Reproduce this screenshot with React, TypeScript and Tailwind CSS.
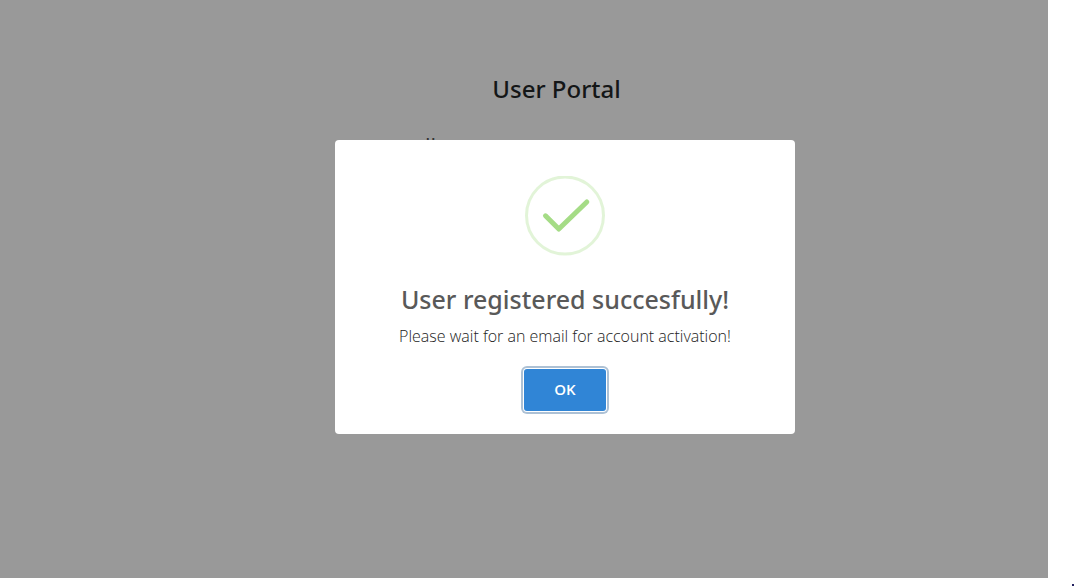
import { useEffect, useRef } from 'react';

function SuccessIcon() {
  return (
    <svg viewBox="0 0 80 80" className="h-20 w-20" fill="none" aria-hidden="true">
      <circle cx="40" cy="39.5" r="38.5" stroke="#a5dc86" strokeOpacity="0.32" strokeWidth="3" />
      <path
        d="M20.5 39.8 33.8 53 61.8 26"
        stroke="#a5dc86"
        strokeWidth="5"
        strokeLinecap="round"
        strokeLinejoin="round"
      />
    </svg>
  );
}

function SuccessDialog() {
  const okRef = useRef<HTMLButtonElement>(null);
  useEffect(() => okRef.current?.focus(), []);

  return (
    <div className="absolute inset-0 flex items-center justify-center pb-3 pl-14">
      <div
        role="dialog"
        aria-modal="true"
        aria-labelledby="dialog-title"
        aria-describedby="dialog-text"
        className="flex w-full max-w-[460px] flex-col items-center rounded bg-white pt-9 pb-[23px]"
      >
        <SuccessIcon />
        <h2 id="dialog-title" className="mt-[23px] font-['Noto_Sans',sans-serif] text-[25px] leading-10 font-medium text-[#595959]">
          User registered succesfully!
        </h2>
        <p id="dialog-text" className="mt-[3px] text-[16px] leading-7 font-light text-[#222222]">
          Please wait for an email for account activation!
        </p>
        <button
          ref={okRef}
          type="button"
          className="mt-[19px] flex h-[42px] w-[82px] items-center justify-center rounded-[3px] bg-[#3085d6] pb-0.5 text-[15px] font-semibold text-white shadow-[0_0_0_1px_#fff,0_0_0_3px_rgba(50,100,150,0.4)] outline-none"
        >
          OK
        </button>
      </div>
    </div>
  );
}

export default function App() {
  return (
    <div className="relative flex min-h-screen flex-col bg-white pr-[26px] pb-2 font-['Open_Sans','Noto_Sans',sans-serif]">
      <main className="flex grow flex-col items-center bg-[#999999] pt-[71px] pl-[65px]">
        <h1 className="font-['Noto_Sans',sans-serif] text-[24px] leading-9 font-medium text-[#141617]">User Portal</h1>
        <p className="mt-[22px] mr-[252px] text-[22px] leading-8 text-[#333333]">ll</p>
      </main>
      <SuccessDialog />
      <span className="absolute right-0 bottom-0 h-0.5 w-0.5 bg-[#22205f]" />
    </div>
  );
}
